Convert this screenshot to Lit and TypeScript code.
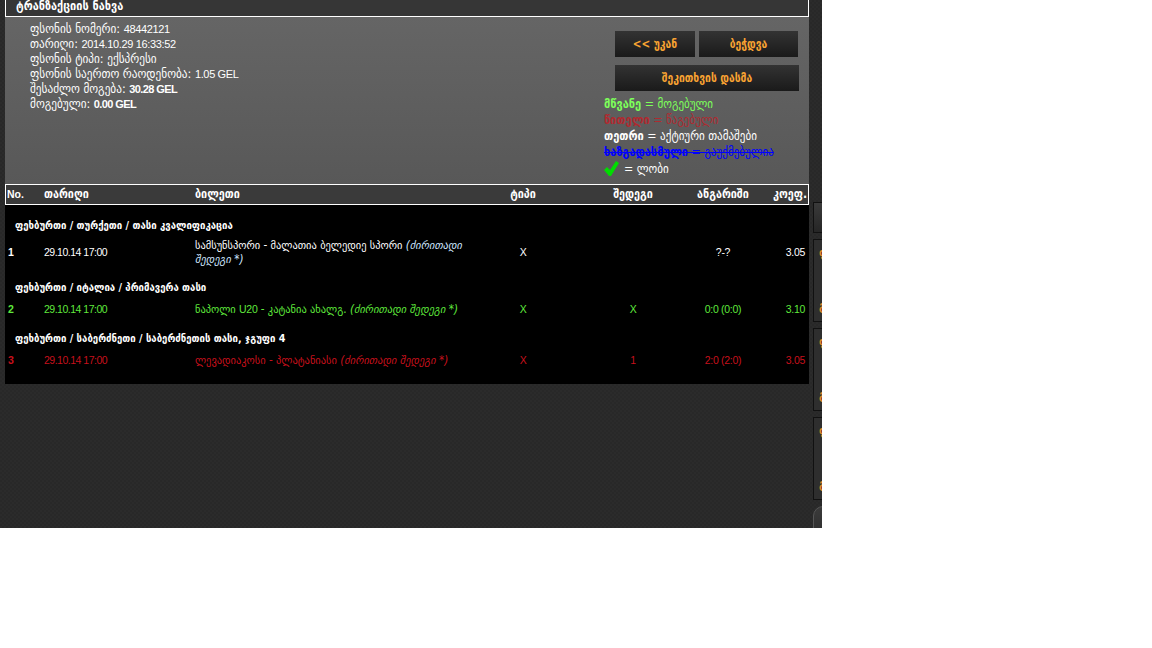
import { LitElement, css, html } from "lit";
import { customElement } from "lit/decorators.js";

const INFO = [
  { label: "ფსონის ნომერი:", value: "48442121" },
  { label: "თარიღი:", value: "2014.10.29 16:33:52" },
  { label: "ფსონის ტიპი: ექსპრესი", value: "" },
  { label: "ფსონის საერთო რაოდენობა:", value: "1.05 GEL" },
  { label: "შესაძლო მოგება:", value: "30.28 GEL", bold: true },
  { label: "მოგებული:", value: "0.00 GEL", bold: true },
];

const U20 = html`<span class="num">U20</span>`;

const ROWS = [
  {
    group: "ფეხბურთი / თურქეთი / თასი კვალიფიკაცია",
    no: "1",
    match: html`სამსუნსპორი - მალათია ბელედიე სპორი`,
    result: "",
    score: "?-?",
    odd: "3.05",
    tone: "active",
  },
  {
    group: "ფეხბურთი / იტალია / პრიმავერა თასი",
    no: "2",
    match: html`ნაპოლი ${U20} - კატანია ახალგ.`,
    result: "X",
    score: "0:0 (0:0)",
    odd: "3.10",
    tone: "won",
  },
  {
    group: "ფეხბურთი / საბერძნეთი / საბერძნეთის თასი, ჯგუფი 4",
    no: "3",
    match: html`ლევადიაკოსი - პლატანიასი`,
    result: "1",
    score: "2:0 (2:0)",
    odd: "3.05",
    tone: "lost",
  },
];

@customElement("app-root")
export class AppRoot extends LitElement {
  static styles = css`
    :host {
      display: block;
      width: 1152px;
      height: 648px;
      background: #fff;
      font-family: "DejaVu Sans Condensed", "DejaVu Sans", sans-serif;
      font-size: 12.5px;
      color: #fff;
    }
    .num {
      font-family: "Liberation Sans", sans-serif;
    }
    .page {
      display: flex;
      width: 822px;
      height: 528px;
      overflow: hidden;
      background-color: #2a2a2a;
      background-image: repeating-conic-gradient(#2b2b2b 0 25%, #282828 0 50%);
      background-size: 4px 4px;
    }
    .main {
      width: 804px;
      margin-left: 5px;
      flex: none;
    }
    .title {
      height: 17px;
      box-sizing: border-box;
      border: 1px solid #fff;
      border-top: 0;
      background: #363636;
      padding-left: 10px;
      font-weight: bold;
      font-size: 12.2px;
      line-height: 13px;
    }
    .panel {
      display: flex;
      justify-content: space-between;
      height: 167px;
      background: linear-gradient(#656565, #585858);
    }
    .info {
      padding: 4px 0 0 25px;
    }
    .info div {
      height: 15px;
      line-height: 15px;
    }
    .info .num {
      font-size: 11px;
      letter-spacing: -0.35px;
    }
    .info b.num {
      letter-spacing: -0.6px;
    }
    .side {
      width: 205px;
      padding-top: 14px;
    }
    .buttons {
      display: flex;
      flex-wrap: wrap;
      gap: 8px 4px;
      margin-left: 11px;
    }
    .btn {
      height: 26px;
      width: 80px;
      background: linear-gradient(#333, #1a1a1a);
      color: #f9a332;
      font-weight: bold;
      font-size: 11.5px;
      text-align: center;
      line-height: 26px;
    }
    .btn.mid { width: 99px; }
    .btn.wide { width: 184px; }
    .legend {
      margin-top: 5px;
      line-height: 16px;
      font-size: 12.3px;
    }
    .g { color: #7dff5a; }
    .r { color: #b02a30; }
    .bl { color: #00f; text-decoration: line-through; }
    .check { display: flex; align-items: center; gap: 5px; height: 17px; }
    .head {
      display: grid;
      grid-template-columns: 38px 151px 286px 84px 120px 76px 1fr;
      box-sizing: border-box;
      height: 21px;
      border: 1px solid #fff;
      background: #3a3a3a;
      line-height: 18px;
      font-weight: bold;
      font-size: 12px;
    }
    .head .no { padding-left: 1px; font-size: 10.5px; }
    .head .c { text-align: center; }
    .head .res { padding-left: 16px; }
    .head .end { text-align: right; padding-right: 1px; }
    .body {
      height: 179px;
      box-sizing: border-box;
      padding-top: 12px;
      background: #000;
      font-size: 11.6px;
    }
    .group {
      height: 18px;
      padding-left: 10px;
      font-weight: bold;
      font-size: 10.7px;
      line-height: 18px;
    }
    .row {
      display: grid;
      grid-template-columns: 39px 151px 286px 84px 120px 76px 1fr;
      align-items: center;
      min-height: 17px;
      line-height: 14px;
      margin: 3px 0 13px;
    }
    .row .num {
      font-size: 10.5px;
      letter-spacing: -0.3px;
    }
    .row .date {
      letter-spacing: -0.5px;
    }
    .row .no { padding-left: 3px; font-weight: bold; }
    .row .c { text-align: center; }
    .row .res { padding-left: 16px; }
    .row .odd { text-align: right; padding-right: 4px; }
    .row.won { color: #5fe83c; }
    .row.lost { color: #c8101c; }
    .row.active { color: #fff; }
    .row.active i { color: #cfe6ff; }
    .rail {
      flex: 1;
      margin-left: 4px;
      padding-top: 202px;
    }
    .card {
      box-sizing: border-box;
      height: 83px;
      margin-bottom: 6px;
      border: 1px solid #111;
      border-right: 0;
      background: #2e2e2e;
      color: #e08a2a;
      font-size: 12px;
      font-weight: bold;
      line-height: 14px;
      display: flex;
      flex-direction: column;
      justify-content: space-between;
      padding: 6px 0 8px 5px;
      overflow: hidden;
    }
    .card.top {
      height: 31px;
      background: linear-gradient(#3a3a3a, #262626);
    }
    .card.tail {
      height: 30px;
      border: 1px solid #555;
      border-radius: 10px 0 0 0;
      background: linear-gradient(#3a3a3a, #2e2e2e);
    }
  `;

  render() {
    return html`
      <div class="page">
        <div class="main">
          <div class="title">ტრანზაქციის ნახვა</div>
          <div class="panel">
            <div class="info">
              ${INFO.map(
                (it) => html`<div>
                  ${it.label}
                  ${it.bold
                    ? html`<b class="num">${it.value}</b>`
                    : html`<span class="num">${it.value}</span>`}
                </div>`
              )}
            </div>
            <div class="side">
              <div class="buttons">
                <div class="btn">&lt;&lt; უკან</div>
                <div class="btn mid">ბეჭდვა</div>
                <div class="btn wide">შეკითხვის დასმა</div>
              </div>
              <div class="legend">
                <div class="g"><b>მწვანე</b> = მოგებული</div>
                <div class="r"><b>წითელი</b> = წაგებული</div>
                <div><b>თეთრი</b> = აქტიური თამაშები</div>
                <div class="bl"><b>ხაზგადასმული</b> = გაუქმებულია</div>
                <div class="check">
                  <svg width="15" height="15" viewBox="0 0 15 15">
                    <path d="M0 9 L3 6 L6 9 L12 0 L15 2 L7 15 L5 15 Z" fill="#0d0"></path>
                  </svg>
                  <span>= ლობი</span>
                </div>
              </div>
            </div>
          </div>
          <div class="head">
            <span class="no num">No.</span><span>თარიღი</span><span>ბილეთი</span>
            <span class="c">ტიპი</span><span class="c res">შედეგი</span>
            <span class="c">ანგარიში</span><span class="end">კოეფ.</span>
          </div>
          <div class="body">
            ${ROWS.map(
              (r) => html`
                <div class="group">${r.group}</div>
                <div class="row ${r.tone}">
                  <span class="no num">${r.no}</span>
                  <span class="num date">29.10.14 17:00</span>
                  <span>${r.match} <i>(ძირითადი შედეგი *)</i></span>
                  <span class="c num">X</span>
                  <span class="c res num">${r.result}</span>
                  <span class="c num">${r.score}</span>
                  <span class="odd num">${r.odd}</span>
                </div>
              `
            )}
          </div>
        </div>
        <div class="rail">
          <div class="card top"></div>
          <div class="card"><span>ფ</span><span>გ</span></div>
          <div class="card"><span>ფ</span><span>გ</span></div>
          <div class="card"><span>ფ</span><span>გ</span></div>
          <div class="card tail"></div>
        </div>
      </div>
    `;
  }
}
